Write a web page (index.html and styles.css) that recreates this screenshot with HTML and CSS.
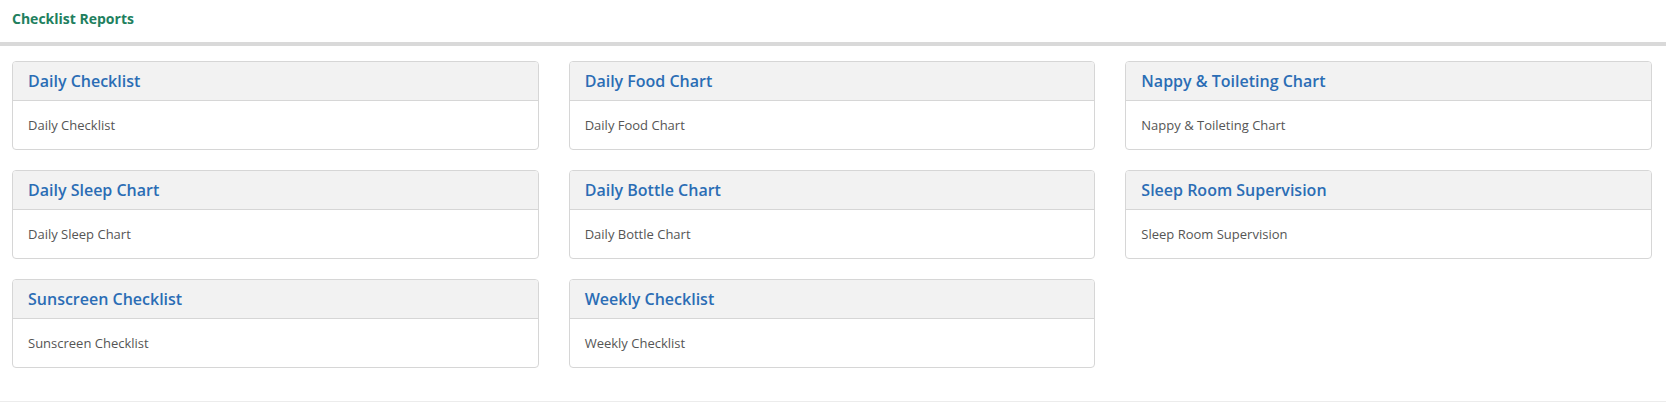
FILE: index.html
```html
<!DOCTYPE html>
<html>
<head>
<meta charset="utf-8">
<title>Checklist Reports</title>
<link rel="stylesheet" href="styles.css">
</head>
<body>
<header class="topbar">
  <h1 class="page-title">Checklist Reports</h1>
</header>
<main class="content">
  <div class="grid">
    <section class="card"><div class="card-head"><h2>Daily Checklist</h2></div><div class="card-body">Daily Checklist</div></section>
    <section class="card"><div class="card-head"><h2>Daily Food Chart</h2></div><div class="card-body">Daily Food Chart</div></section>
    <section class="card"><div class="card-head"><h2>Nappy &amp; Toileting Chart</h2></div><div class="card-body">Nappy &amp; Toileting Chart</div></section>
    <section class="card"><div class="card-head"><h2>Daily Sleep Chart</h2></div><div class="card-body">Daily Sleep Chart</div></section>
    <section class="card"><div class="card-head"><h2>Daily Bottle Chart</h2></div><div class="card-body">Daily Bottle Chart</div></section>
    <section class="card"><div class="card-head"><h2>Sleep Room Supervision</h2></div><div class="card-body">Sleep Room Supervision</div></section>
    <section class="card"><div class="card-head"><h2>Sunscreen Checklist</h2></div><div class="card-body">Sunscreen Checklist</div></section>
    <section class="card"><div class="card-head"><h2>Weekly Checklist</h2></div><div class="card-body">Weekly Checklist</div></section>
  </div>
</main>
</body>
</html>
```

FILE: styles.css
```css
* { box-sizing: border-box; }
html, body { margin: 0; padding: 0; }
body {
  font-family: "Open Sans", "Liberation Sans", sans-serif;
  background: #fff;
  color: #555;
  width: 1666px;
  height: 403px;
  overflow: hidden;
}
.topbar {
  height: 46px;
  border-bottom: 4px solid #d9d9d9;
  padding: 0 12px;
  display: flex;
  align-items: center;
}
.page-title {
  margin: 0 0 4px 0;
  font-size: 14px;
  font-weight: 700;
  color: #217f5e;
  line-height: 1;
}
.content {
  padding: 15px 14px 0 12px;
  height: 356px;
  border-bottom: 1px solid #ececec;
}
.grid {
  display: grid;
  grid-template-columns: repeat(3, 1fr);
  column-gap: 30px;
  row-gap: 20px;
}
.card {
  border: 1px solid #d6d6d6;
  border-radius: 4px;
  overflow: hidden;
  height: 89px;
}
.card-head {
  height: 39px;
  background: #f2f2f2;
  border-bottom: 1px solid #d6d6d6;
  padding: 0 15px;
  display: flex;
  align-items: center;
}
.card-head h2 {
  margin: 0 0 1px 0;
  font-size: 16px;
  font-weight: 600;
  color: #2b6db5;
  line-height: 1;
}
.card-body {
  height: 48px;
  padding: 0 15px;
  display: flex;
  align-items: center;
  font-size: 13px;
  color: #555;
}
```
